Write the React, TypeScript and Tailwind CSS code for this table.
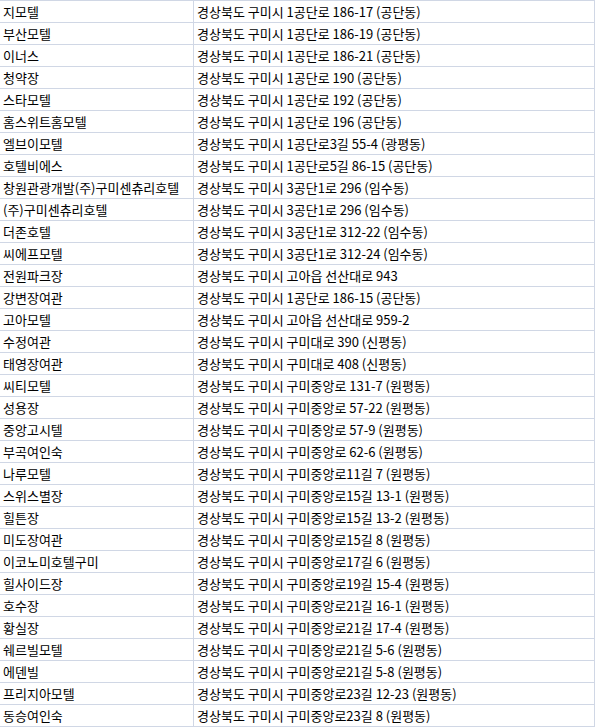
import React from 'react';

const rows: [string, string][] = [
  ['지모텔', '경상북도 구미시 1공단로 186-17 (공단동)'],
  ['부산모텔', '경상북도 구미시 1공단로 186-19 (공단동)'],
  ['이너스', '경상북도 구미시 1공단로 186-21 (공단동)'],
  ['청약장', '경상북도 구미시 1공단로 190 (공단동)'],
  ['스타모텔', '경상북도 구미시 1공단로 192 (공단동)'],
  ['홈스위트홈모텔', '경상북도 구미시 1공단로 196 (공단동)'],
  ['엘브이모텔', '경상북도 구미시 1공단로3길 55-4 (광평동)'],
  ['호텔비에스', '경상북도 구미시 1공단로5길 86-15 (공단동)'],
  ['창원관광개발(주)구미센츄리호텔', '경상북도 구미시 3공단1로 296 (임수동)'],
  ['(주)구미센츄리호텔', '경상북도 구미시 3공단1로 296 (임수동)'],
  ['더존호텔', '경상북도 구미시 3공단1로 312-22 (임수동)'],
  ['씨에프모텔', '경상북도 구미시 3공단1로 312-24 (임수동)'],
  ['전원파크장', '경상북도 구미시 고아읍 선산대로 943'],
  ['강변장여관', '경상북도 구미시 1공단로 186-15 (공단동)'],
  ['고아모텔', '경상북도 구미시 고아읍 선산대로 959-2'],
  ['수정여관', '경상북도 구미시 구미대로 390 (신평동)'],
  ['태영장여관', '경상북도 구미시 구미대로 408 (신평동)'],
  ['씨티모텔', '경상북도 구미시 구미중앙로 131-7 (원평동)'],
  ['성용장', '경상북도 구미시 구미중앙로 57-22 (원평동)'],
  ['중앙고시텔', '경상북도 구미시 구미중앙로 57-9 (원평동)'],
  ['부곡여인숙', '경상북도 구미시 구미중앙로 62-6 (원평동)'],
  ['나루모텔', '경상북도 구미시 구미중앙로11길 7 (원평동)'],
  ['스위스별장', '경상북도 구미시 구미중앙로15길 13-1 (원평동)'],
  ['힐튼장', '경상북도 구미시 구미중앙로15길 13-2 (원평동)'],
  ['미도장여관', '경상북도 구미시 구미중앙로15길 8 (원평동)'],
  ['이코노미호텔구미', '경상북도 구미시 구미중앙로17길 6 (원평동)'],
  ['힐사이드장', '경상북도 구미시 구미중앙로19길 15-4 (원평동)'],
  ['호수장', '경상북도 구미시 구미중앙로21길 16-1 (원평동)'],
  ['황실장', '경상북도 구미시 구미중앙로21길 17-4 (원평동)'],
  ['쉐르빌모텔', '경상북도 구미시 구미중앙로21길 5-6 (원평동)'],
  ['에덴빌', '경상북도 구미시 구미중앙로21길 5-8 (원평동)'],
  ['프리지아모텔', '경상북도 구미시 구미중앙로23길 12-23 (원평동)'],
  ['동승여인숙', '경상북도 구미시 구미중앙로23길 8 (원평동)'],
];

export default function App() {
  return (
    <div className="w-[595px] h-[727px] bg-white overflow-hidden">
      {/* 시트 표 */}
      <div
        className="w-[595px] border-t border-[#d0d7e5] text-[13px] leading-none text-black"
        style={{ fontFamily: '"Noto Sans CJK KR", "Noto Sans", sans-serif' }}
      >
        {rows.map(([name, addr], i) => (
          <div key={i} className="flex h-[22px] border-b border-[#d0d7e5]">
            <div className="w-[194px] shrink-0 flex items-center pl-[3px] border-r border-[#d0d7e5] whitespace-nowrap overflow-hidden">
              {name}
            </div>
            <div className="w-[401px] shrink-0 flex items-center pl-[3px] border-r border-[#d0d7e5] whitespace-nowrap">
              {addr}
            </div>
          </div>
        ))}
      </div>
    </div>
  );
}
